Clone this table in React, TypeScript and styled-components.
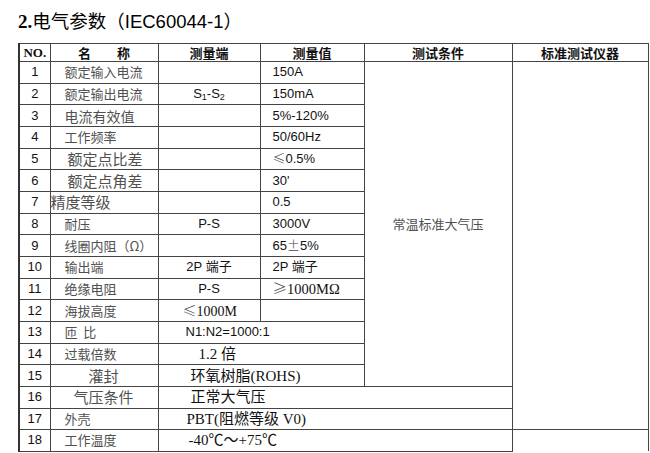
import React from 'react';
import styled, { createGlobalStyle, css } from 'styled-components';

const GlobalStyle = createGlobalStyle`
  html, body {
    margin: 0;
    padding: 0;
    background: #ffffff;
  }
  body {
    font-family: "Liberation Sans", Arial, "Noto Sans CJK SC", sans-serif;
    color: #111;
  }
`;

const LINE = '#444';

const fonts = {
  sans: '"Liberation Sans", Arial, "Noto Sans CJK SC", sans-serif',
  serif: '"Liberation Serif", "Times New Roman", "Noto Sans CJK SC", serif',
  cjk: '"Noto Sans CJK SC", "Liberation Sans", sans-serif',
};

type FontKind = keyof typeof fonts;

const Page = styled('div')`
  width: 650px;
  height: 453px;
  padding: 0 0 0 18px;
  box-sizing: border-box;
  overflow: hidden;
`;

const Title = styled('h2')`
  margin: 0;
  padding-top: 7px;
  height: 35px;
  box-sizing: border-box;
  font-family: ${fonts.cjk};
  font-size: 18.5px;
  font-weight: 400;
  line-height: 26px;
  color: #000;
  white-space: nowrap;
`;

const TitleNum = styled('b')`
  font-family: ${fonts.serif};
  font-weight: 700;
  font-size: 19px;
`;

const TitleLatin = styled('span')`
  font-family: ${fonts.sans};
`;

const Table = styled('table')`
  border-collapse: collapse;
  table-layout: fixed;
  width: 629px;
  margin-top: 8px;
  border-left: 2px solid #333;
`;

const HeadRow = styled('tr')`
  height: 18px;
`;

const BodyRow = styled('tr')`
  height: 21.67px;
`;

const Th = styled('th')<{ $font?: FontKind }>`
  border: 1.5px solid ${LINE};
  padding: 0;
  font-family: ${({ $font }) => fonts[$font ?? 'cjk']};
  font-size: 13px;
  font-weight: 700;
  line-height: 16px;
  text-align: center;
  color: #111;
  white-space: pre;
`;

const Td = styled('td')<{
  $font?: FontKind;
  $size?: number;
  $pad?: number;
  $center?: boolean;
  $muted?: boolean;
  $open?: boolean;
}>`
  ${({ $font, $size, $pad, $center, $muted, $open }) => css`
    border: 1.5px solid ${LINE};
    ${$open && 'border-bottom: none;'}
    padding: 0 0 0 ${$pad ?? 0}px;
    font-family: ${fonts[$font ?? 'sans']};
    font-size: ${$size ?? 13}px;
    line-height: 16px;
    text-align: ${$center ? 'center' : 'left'};
    vertical-align: middle;
    color: ${$muted ? '#505050' : '#111'};
    white-space: pre;
    overflow: hidden;
  `}
`;

const Sub = styled('sub')`
  font-size: 9px;
  vertical-align: -2px;
  line-height: 0;
`;

// CJK-width maths signs (≤ ≥ ±) as set in the original sheet
const Sym = styled('span')`
  font-family: ${fonts.cjk};
  font-weight: 300;
  color: #444;
`;

type Name = { text: string; pad: number; size?: number };

type Row = {
  no: number;
  name: Name;
  cells: React.ReactNode;
};

const names: Name[] = [
  { text: '额定输入电流', pad: 14 },
  { text: '额定输出电流', pad: 14 },
  { text: '电流有效值', pad: 14, size: 14 },
  { text: '工作频率', pad: 14 },
  { text: '额定点比差', pad: 17, size: 15 },
  { text: '额定点角差', pad: 17, size: 15 },
  { text: '精度等级', pad: 0, size: 15 },
  { text: '耐压', pad: 14 },
  { text: '线圈内阻（Ω）', pad: 14 },
  { text: '输出端', pad: 14 },
  { text: '绝缘电阻', pad: 14 },
  { text: '海拔高度', pad: 14 },
  { text: '匝  比', pad: 14 },
  { text: '过载倍数', pad: 14 },
  { text: '灌封', pad: 38, size: 15 },
  { text: '气压条件', pad: 23, size: 15 },
  { text: '外壳', pad: 14 },
  { text: '工作温度', pad: 14 },
];

const pair = (
  terminal: React.ReactNode,
  value: React.ReactNode,
  valueFont: FontKind = 'sans',
  valueSize = 13,
) => (
  <>
    <Td $center>{terminal}</Td>
    <Td $pad={12} $font={valueFont} $size={valueSize}>{value}</Td>
  </>
);

const cellsFor: React.ReactNode[] = [
  <>
    {pair('', '150A')}
    <Td rowSpan={15} $center $font="cjk" $muted>常温标准大气压</Td>
    <Td rowSpan={17} />
  </>,
  pair(<>S<Sub>1</Sub>-S<Sub>2</Sub></>, '150mA'),
  pair('', '5%-120%'),
  pair('', '50/60Hz'),
  pair('', <><Sym>≤</Sym>0.5%</>),
  pair('', "30'"),
  pair('', '0.5'),
  pair('P-S', '3000V'),
  pair('', <>65<Sym>±</Sym>5%</>),
  pair('2P 端子', '2P 端子'),
  pair('P-S', <><Sym>≥</Sym>1000MΩ</>, 'serif', 14.5),
  <>
    <Td $pad={24} $font="serif" $size={14}><Sym>≤</Sym>1000M</Td>
    <Td />
  </>,
  <Td colSpan={2} $pad={27}>N1:N2=1000:1</Td>,
  <Td colSpan={2} $pad={40} $font="serif" $size={15}>1.2 倍</Td>,
  <Td colSpan={2} $pad={32} $font="serif" $size={15}>环氧树脂(ROHS)</Td>,
  <Td colSpan={3} $pad={32} $font="serif" $size={15}>正常大气压</Td>,
  <Td colSpan={3} $pad={28} $font="serif" $size={15}>PBT(阻燃等级 V0)</Td>,
  <>
    <Td colSpan={3} $pad={30} $font="serif" $size={15}>-40℃～+75℃</Td>
    <Td $open />
  </>,
];

const rows: Row[] = names.map((name, i) => ({ no: i + 1, name, cells: cellsFor[i] }));

const widths = [31, 108, 102, 104, 148, 136];

export default function App() {
  return (
    <>
      <GlobalStyle />
      <Page>
        <Title>
          <TitleNum>2.</TitleNum>电气参数<TitleLatin>（IEC60044-1）</TitleLatin>
        </Title>
        <Table>
          <colgroup>
            {widths.map((w, i) => (
              <col key={i} style={{ width: w }} />
            ))}
          </colgroup>
          <thead>
            <HeadRow>
              <Th $font="serif">NO.</Th>
              <Th>{'名　　称'}</Th>
              <Th>测量端</Th>
              <Th>测量值</Th>
              <Th>测试条件</Th>
              <Th>标准测试仪器</Th>
            </HeadRow>
          </thead>
          <tbody>
            {rows.map((r) => (
              <BodyRow key={r.no}>
                <Td $center>{r.no}</Td>
                <Td $font="cjk" $muted $pad={r.name.pad} $size={r.name.size ?? 13}>
                  {r.name.text}
                </Td>
                {r.cells}
              </BodyRow>
            ))}
          </tbody>
        </Table>
      </Page>
    </>
  );
}
